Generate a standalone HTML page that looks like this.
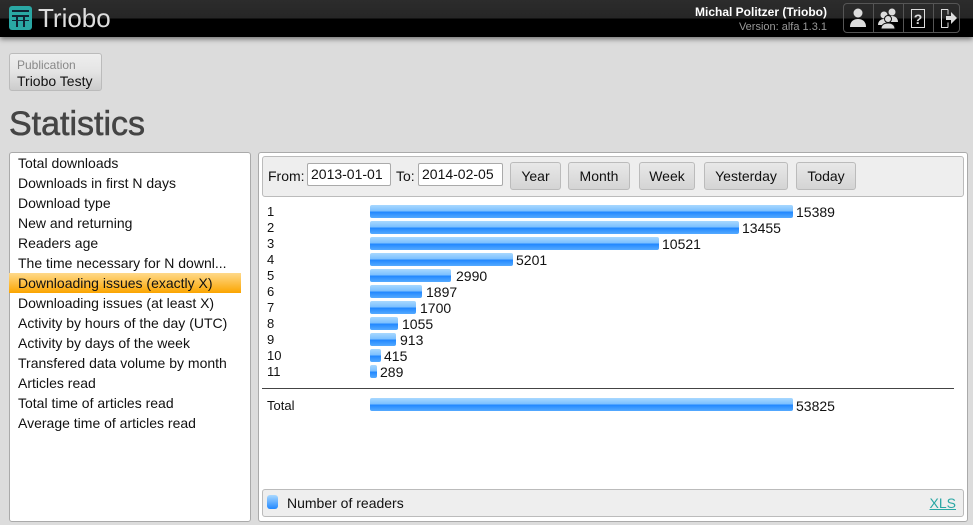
<!DOCTYPE html>
<html><head><meta charset="utf-8"><style>
*{margin:0;padding:0;box-sizing:border-box}
body{width:973px;height:525px;background:#dcdcdc;font-family:"Liberation Sans",sans-serif;position:relative;overflow:hidden;color:#111}
.hdr{position:absolute;left:0;top:0;width:973px;height:37px;background:linear-gradient(#2c2c2c 0,#262626 18px,#000 19px,#000 37px);box-shadow:0 2px 5px rgba(0,0,0,.5)}
.logo{position:absolute;left:9px;top:6px;width:23px;height:24px;background:#2aa7a4;border-radius:3px}
.logo i{position:absolute;background:#123}
.ltxt{position:absolute;left:38px;top:3px;font-size:26px;color:#ddd;letter-spacing:0}
.user{position:absolute;right:146px;top:5px;font-size:12px;font-weight:bold;color:#fff;text-align:right}
.ver{position:absolute;right:146px;top:21px;font-size:11px;color:#999;text-align:right}
.icons{position:absolute;left:843px;top:3px;width:117px;height:30px;border:1px solid #555;border-radius:4px;display:flex}
.icons div{flex:1;border-right:1px solid #555;position:relative}
.icons div:last-child{border-right:none}
.pub{position:absolute;left:9px;top:53px;width:93px;height:38px;border:1px solid #bbb;border-radius:3px;background:linear-gradient(#eee,#e4e4e4 50%,#ccc)}
.pub .a{position:absolute;left:7px;top:4px;font-size:12px;color:#888}
.pub .b{position:absolute;left:7px;top:19px;font-size:14px;color:#111}
h1{position:absolute;left:9px;top:105px;font-size:34px;font-weight:normal;color:#444;-webkit-text-stroke:0.6px #444}
.side{position:absolute;left:9px;top:152px;width:242px;height:370px;background:#fff;border:1px solid #aaa;border-radius:3px}
.side div{height:20px;line-height:20px;padding-left:8px;font-size:14px;white-space:nowrap}
.side .sel{background:linear-gradient(#ffd98a,#fba500);margin:0 9px 0 -1px;padding-left:9px}
.main{position:absolute;left:258px;top:152px;width:710px;height:370px;background:#fff;border:1px solid #aaa;border-radius:3px}
.tb{position:absolute;left:3px;top:3px;width:702px;height:41px;background:#eee;border:1px solid #bbb;border-radius:3px;font-size:14px}
.tb span{position:absolute;top:11px}
.inp{position:absolute;top:6px;height:23px;border:1px solid #aaa;background:#fff;border-radius:2px;padding:2px 3px;font-size:14px}
.btn{position:absolute;top:5px;height:28px;border:1px solid #bbb;border-radius:3px;background:linear-gradient(#e8e8e8,#d4d4d4);text-align:center;line-height:26px;font-size:14px}
.row{position:absolute;left:8px;font-size:13px;height:16px;line-height:16px}
.bar{position:absolute;left:111px;height:13px;border-radius:2px;background:linear-gradient(#a8d8ff 0,#7cc0ff 45%,#2288ff 55%,#55aaff 100%)}
.val{position:absolute;font-size:14px;height:16px;line-height:16px}
.sep{position:absolute;left:3px;width:692px;top:235px;height:1px;background:#444}
.leg{position:absolute;left:3px;top:336px;width:702px;height:28px;background:#eee;border:1px solid #bbb;border-radius:3px;font-size:14px}
</style></head><body>
<div class="hdr">
<div class="logo"><i style="left:3px;top:4px;width:17px;height:2px"></i><i style="left:3px;top:9px;width:17px;height:2px"></i><i style="left:7px;top:9px;width:2px;height:12px"></i><i style="left:14px;top:9px;width:2px;height:12px"></i><i style="left:3px;top:14px;width:17px;height:1px"></i></div>
<div class="ltxt">Triobo</div>
<div class="user">Michal Politzer (Triobo)</div>
<div class="ver">Version: alfa 1.3.1</div>
<div class="icons">
<div><svg width="29" height="28" viewBox="0 0 29 28"><circle cx="14" cy="9" r="4.5" fill="#ddd"/><path d="M6 23c0-6 4-8 8-8s8 2 8 8z" fill="#ddd"/></svg></div>
<div><svg width="29" height="28" viewBox="0 0 29 28"><circle cx="18" cy="8" r="3.5" fill="#ddd"/><path d="M12 18c0-4 3-6 6-6s6 2 6 6z" fill="#ddd"/><circle cx="10" cy="11" r="3.5" fill="#ddd"/><path d="M4 21c0-4 3-6 6-6s6 2 6 6z" fill="#ddd"/><circle cx="14" cy="15" r="3.5" fill="#ddd" stroke="#111"/><path d="M7 25c0-4 3-6 7-6s7 2 7 6z" fill="#ddd" stroke="#111"/></svg></div>
<div><svg width="29" height="28" viewBox="0 0 29 28"><rect x="7.5" y="5.5" width="13" height="18" fill="none" stroke="#ddd"/><text x="14" y="20" font-size="14" font-weight="bold" fill="#ddd" text-anchor="middle" font-family="Liberation Sans">?</text></svg></div>
<div><svg width="29" height="28" viewBox="0 0 29 28"><path d="M14 5.5H7.5v18H14" fill="none" stroke="#ddd"/><path d="M14 5.5v5M14 18.5v5" stroke="#ddd"/><path d="M12 12h5v-4l6 6-6 6v-4h-5z" fill="#ddd"/></svg></div>
</div>
</div>
<div class="pub"><div class="a">Publication</div><div class="b">Triobo Testy</div></div>
<h1>Statistics</h1>
<div class="side">
<div>Total downloads</div><div>Downloads in first N days</div><div>Download type</div><div>New and returning</div><div>Readers age</div><div>The time necessary for N downl...</div><div class="sel">Downloading issues (exactly X)</div><div>Downloading issues (at least X)</div><div>Activity by hours of the day (UTC)</div><div>Activity by days of the week</div><div>Transfered data volume by month</div><div>Articles read</div><div>Total time of articles read</div><div>Average time of articles read</div>
</div>
<div class="main">
<div class="tb">
<span style="left:5px">From:</span><div class="inp" style="left:44px;width:84px">2013-01-01</div>
<span style="left:133px">To:</span><div class="inp" style="left:155px;width:85px">2014-02-05</div>
<div class="btn" style="left:247px;width:51px">Year</div>
<div class="btn" style="left:305px;width:62px">Month</div>
<div class="btn" style="left:376px;width:56px">Week</div>
<div class="btn" style="left:441px;width:84px">Yesterday</div>
<div class="btn" style="left:533px;width:60px">Today</div>
</div>
<div class="row" style="top:51px">1</div><div class="bar" style="top:52px;width:423px"></div><div class="val" style="left:537px;top:51px">15389</div>
<div class="row" style="top:67px">2</div><div class="bar" style="top:68px;width:369px"></div><div class="val" style="left:483px;top:67px">13455</div>
<div class="row" style="top:83px">3</div><div class="bar" style="top:84px;width:289px"></div><div class="val" style="left:403px;top:83px">10521</div>
<div class="row" style="top:99px">4</div><div class="bar" style="top:100px;width:143px"></div><div class="val" style="left:257px;top:99px">5201</div>
<div class="row" style="top:115px">5</div><div class="bar" style="top:116px;width:81px"></div><div class="val" style="left:197px;top:115px">2990</div>
<div class="row" style="top:131px">6</div><div class="bar" style="top:132px;width:52px"></div><div class="val" style="left:167px;top:131px">1897</div>
<div class="row" style="top:147px">7</div><div class="bar" style="top:148px;width:46px"></div><div class="val" style="left:161px;top:147px">1700</div>
<div class="row" style="top:163px">8</div><div class="bar" style="top:164px;width:28px"></div><div class="val" style="left:143px;top:163px">1055</div>
<div class="row" style="top:179px">9</div><div class="bar" style="top:180px;width:26px"></div><div class="val" style="left:141px;top:179px">913</div>
<div class="row" style="top:195px">10</div><div class="bar" style="top:196px;width:11px"></div><div class="val" style="left:125px;top:195px">415</div>
<div class="row" style="top:211px">11</div><div class="bar" style="top:212px;width:7px"></div><div class="val" style="left:121px;top:211px">289</div>
<div class="sep"></div>
<div class="row" style="top:245px">Total</div><div class="bar" style="top:245px;width:423px"></div><div class="val" style="left:537px;top:245px">53825</div>
<div class="leg"><div style="position:absolute;left:4px;top:5px;width:11px;height:14px;border-radius:3px;background:linear-gradient(#a8d8ff,#2288ff)"></div><span style="position:absolute;left:24px;top:5px">Number of readers</span><span style="position:absolute;right:7px;top:5px;color:#2aa7a4;text-decoration:underline">XLS</span></div>
</div>
</body></html>
